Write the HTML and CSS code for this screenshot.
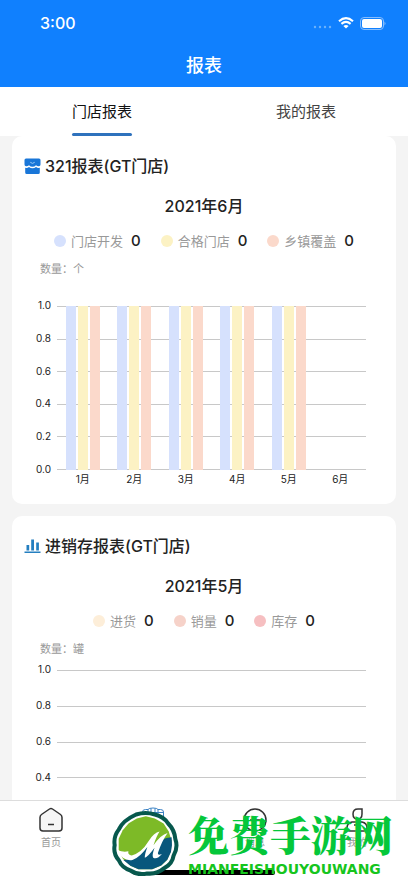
FILE: index.html
```html
<!DOCTYPE html>
<html lang="zh-CN">
<head>
<meta charset="utf-8">
<meta name="viewport" content="width=device-width, initial-scale=1">
<title>报表</title>
<link rel="stylesheet" href="styles.css">
</head>
<body>
<div class="app">
  <header class="header">
    <div class="status">
      <span class="clock">3:00</span>
      <div class="status-icons">
        <svg width="19" height="4" viewBox="0 0 19 4" fill="#6cb2fb"><circle cx="2" cy="2" r="1.2"/><circle cx="7" cy="2" r="1.2"/><circle cx="12" cy="2" r="1.2"/><circle cx="17" cy="2" r="1.2"/></svg>
        <svg width="16" height="12" viewBox="0 0 16 12" fill="none" stroke="#fff" stroke-width="2.1"><path d="M1 4.2Q8-2 15 4.2M3.4 6.9Q8 2.9 12.6 6.9"/><path d="M8 11.6L5.4 9Q8 6.9 10.6 9Z" fill="#fff" stroke="none"/></svg>
        <svg width="26" height="13" viewBox="0 0 26 13"><rect x=".5" y=".5" width="23" height="12" rx="3.5" fill="none" stroke="#86bdfd"/><rect x="2" y="2" width="20" height="9" rx="2" fill="#fff"/><path d="M24.5 4.5q2 2 0 4z" fill="#86bdfd"/></svg>
      </div>
    </div>
    <h1 class="page-title">报表</h1>
  </header>
  <nav class="tabs">
    <button class="tab tab-active" type="button"><span>门店报表</span></button>
    <button class="tab" type="button"><span>我的报表</span></button>
  </nav>
  <main class="content">
    <section class="card">
      <h2 class="card-title">
        <svg width="17" height="17" viewBox="0 0 17 17"><path d="M2 .5h13q1.500 0 1.500 1.500v4.500q0 1.500-1.500 1.800-1.500.3-3-1-1.500 1.500-3.500 1.500T5 7.300q-1.500 1.300-3 1Q.5 8 .5 6.500V2Q.5.5 2 .5Z" fill="#1976d8"/><path d="M1.200 9.800q2.300.4 3.800-.8 1.500 1.300 3.500 1.300T12 9q1.500 1.200 3.800.8v4.700q0 1.500-1.500 1.500H2.700q-1.500 0-1.500-1.500Z" fill="#1976d8"/><path d="M6.300 4.300q2.200 2.200 4.400 0" fill="none" stroke="#9bcaf5"/></svg>
        <span>321报表(GT门店)</span>
      </h2>
      <h3 class="month">2021年6月</h3>
      <ul class="legend">
        <li><i class="dot blue"></i><span>门店开发</span><b>0</b></li>
        <li><i class="dot yellow"></i><span>合格门店</span><b>0</b></li>
        <li><i class="dot coral"></i><span>乡镇覆盖</span><b>0</b></li>
      </ul>
      <p class="unit">数量：个</p>
      <div class="chart chart-bars">
        <div class="axis"><span>1.0</span><span>0.8</span><span>0.6</span><span>0.4</span><span>0.2</span><span>0.0</span></div>
        <div class="plot">
          <div class="lines"><hr><hr><hr><hr><hr><hr></div>
          <div class="groups">
            <div class="group"><i class="blue"></i><i class="yellow"></i><i class="coral"></i></div>
            <div class="group"><i class="blue"></i><i class="yellow"></i><i class="coral"></i></div>
            <div class="group"><i class="blue"></i><i class="yellow"></i><i class="coral"></i></div>
            <div class="group"><i class="blue"></i><i class="yellow"></i><i class="coral"></i></div>
            <div class="group"><i class="blue"></i><i class="yellow"></i><i class="coral"></i></div>
            <div class="group"></div>
          </div>
        </div>
        <div class="months"><span>1月</span><span>2月</span><span>3月</span><span>4月</span><span>5月</span><span>6月</span></div>
      </div>
    </section>
    <section class="card">
      <h2 class="card-title">
        <svg width="17" height="17" viewBox="0 0 17 17" fill="#247fc0"><path d="M.5 13.500h16V15H.5zM2.500 7h2.700v5.500H2.500zM7.200 1.500h2.800v11H7.200zM12.200 4.500h2.700v8h-2.700z"/></svg>
        <span>进销存报表(GT门店)</span>
      </h2>
      <h3 class="month">2021年5月</h3>
      <ul class="legend">
        <li><i class="dot cream"></i><span>进货</span><b>0</b></li>
        <li><i class="dot salmon"></i><span>销量</span><b>0</b></li>
        <li><i class="dot pink"></i><span>库存</span><b>0</b></li>
      </ul>
      <p class="unit">数量：罐</p>
      <div class="chart chart-lines">
        <div class="axis"><span>1.0</span><span>0.8</span><span>0.6</span><span>0.4</span><span>0.2</span><span>0.0</span></div>
        <div class="plot"><div class="lines"><hr><hr><hr><hr><hr><hr></div></div>
      </div>
    </section>
  </main>
  <footer class="footer">
    <nav class="bottom-nav">
      <a class="nav-item" href="#home">
        <svg width="26" height="26" viewBox="0 0 26 26" fill="none" stroke="#333" stroke-width="1.5"><path d="M2 10.500Q2 8.500 3.500 7.500L11.500 2q1.500-1 3 0l8 5.500Q24 8.500 24 10.500V21q0 3-3 3H5q-3 0-3-3Z" fill="#f6f6f6"/><path d="M10 17.500h6"/></svg>
        <span>首页</span>
      </a>
      <a class="nav-item nav-current" href="#reports">
        <svg width="26" height="26" viewBox="0 0 26 26" fill="none" stroke="#3b82c4"><path d="M2.500 24V5q0-2.500 3-2.500H8Q9 1 13 1t5 1.500h2.500q3 0 3 2.500v19ZM8 2.500V8M18 2.500V8M3 5.500h20M11 1.500v4M15 1.500v4"/></svg>
        <span>报表</span>
      </a>
      <a class="nav-item" href="#messages">
        <svg width="26" height="26" viewBox="0 0 26 26" fill="none" stroke="#333" stroke-width="1.500"><circle cx="13" cy="13" r="11"/><path d="M8 13h10"/></svg>
        <span>消息</span>
      </a>
      <a class="nav-item" href="#mine">
        <svg width="26" height="26" viewBox="0 0 26 26" fill="none" stroke="#333" stroke-width="1.500"><path d="M18 2v5q0 5-4.500 5T9 7q0-5 5-5ZM8 15h10q5 1 5 6 0 3-3 3H6q-3 0-3-3 0-5 5-6ZM10 18h6"/></svg>
        <span>我的</span>
      </a>
    </nav>
    <div class="home-bar"></div>
    <div class="watermark">
      <svg class="badge" viewBox="0 0 200 196">
        <path d="M72 10Q100 1 128 10Q154 16 167 36Q187 56 189 83Q198 108 184 132Q180 158 156 170Q134 189 105 186Q77 192 55 177Q30 170 20 146Q3 127 8 101Q4 76 20 55Q32 28 72 10Z" fill="#fff" stroke="#07584d" stroke-width="12" stroke-linejoin="round"/>
        <path d="M74 22L101 15L128 22L154 37L169 60L178 88L176 119L165 145L147 162L120 173H79L55 163L33 143L20 115V82L32 57L50 36Z" fill="#7dba27"/>
        <path d="M178 78L179 102L176 122L165 145L147 162L120 173H79L55 163L34 146Q79 145 104 107Q111 128 130 105Q145 80 178 78Z" fill="#08577c"/>
        <path d="M17 117Q33 123 49 120Q46 131 59 132Q88 125 109 90Q125 64 142 61Q132 76 124 102Q145 70 166 65Q149 88 137 125Q136 134 149 128Q135 145 123 139Q118 133 127 109Q108 135 98 139Q97 129 106 106Q84 137 61 146Q32 151 17 117Z" fill="#fff"/>
      </svg>
      <div class="brand"><strong>免费手游网</strong><span>MIANFEISHOUYOUWANG</span></div>
    </div>
  </footer>
</div>
</body>
</html>
```

FILE: styles.css
```css
* { box-sizing: border-box; }
body {
  margin: 0;
  background: #f4f4f4;
  color: #222;
  font-family: Inter, "Noto Sans CJK SC", sans-serif;
}
h1, h2, h3, p, ul { margin: 0; padding: 0; }
svg { display: block; flex: none; }

.app { display: flex; flex-direction: column; height: 100vh; }

.header { flex: none; background: #1080fe; color: #fff; }
.status {
  display: flex;
  justify-content: space-between;
  align-items: center;
  height: 44px;
  padding: 2px 22px 0 40px;
}
.clock { font-size: 16px; font-weight: 500; }
.status-icons { display: flex; align-items: center; gap: 6px; }
.status-icons svg:first-child { margin-top: 8px; }
.page-title { height: 43px; line-height: 43px; font-size: 18px; font-weight: 500; text-align: center; }

.tabs { flex: none; display: flex; height: 49px; background: #fff; }
.tab {
  flex: 1;
  display: flex;
  justify-content: center;
  padding: 0;
  border: 0;
  background: none;
  color: #444;
  font: 400 15px/49px Inter, "Noto Sans CJK SC", sans-serif;
}
.tab span { display: flex; flex-direction: column; height: 49px; }
.tab-active { color: #111; }
.tab-active span::after { content: ""; height: 3px; margin-top: -3px; border-radius: 2px; background: #2f72bd; }

.content { flex: 1; min-height: 0; overflow: hidden; padding: 0 12px; }
.card { margin-bottom: 12px; padding: 18px 12px 14px; border-radius: 10px; background: #fff; }
.card-title { display: flex; align-items: center; gap: 4px; font-size: 16px; line-height: 24px; font-weight: 500; }
.month { margin-top: 16px; font-size: 16px; line-height: 24px; font-weight: 500; text-align: center; }
.legend { display: flex; justify-content: center; gap: 20px; margin-top: 13px; line-height: 20px; list-style: none; }
.legend li { display: flex; align-items: center; }
.legend span { margin: 0 8px 0 5px; color: #999; font-size: 13px; }
.legend b { font-size: 15px; font-weight: 500; }
.dot { width: 12px; height: 12px; border-radius: 50%; }
.unit { margin: 10px 0 0 16px; color: #999; font-size: 11px; line-height: 16px; }

.blue { background: #d6e1fd; }
.yellow { background: #fcf2c4; }
.coral { background: #fbd9cb; }
.cream { background: #fdeed9; }
.salmon { background: #f6d2c9; }
.pink { background: #f6bfc1; }

.chart {
  display: grid;
  grid-template-columns: 27px 1fr;
  column-gap: 6px;
  padding-right: 18px;
  font-size: 10px;
  line-height: 12px;
}
.chart-bars { grid-template-rows: 164px 20px; margin-top: 29px; }
.chart-lines { grid-template-rows: 180px; margin-top: 13px; }
.axis { display: flex; flex-direction: column; justify-content: space-between; margin: -7px 0 -5px; text-align: right; }
.plot { display: grid; }
.lines, .groups { grid-area: 1 / 1; }
.lines { display: flex; flex-direction: column; justify-content: space-between; }
.lines hr { width: 100%; height: 1px; margin: 0; border: 0; background: #c8c8c8; }
.groups { display: flex; z-index: 1; }
.group { flex: 1; display: flex; justify-content: center; gap: 2px; }
.group i { width: 10px; }
.months { grid-column: 2; display: flex; padding-top: 3px; }
.months span { flex: 1; text-align: center; }

.footer { position: relative; flex: none; height: 83px; border-top: 1px solid #ddd; background: #fff; }
.bottom-nav { display: flex; padding-top: 6px; }
.nav-item { flex: 1; display: flex; flex-direction: column; align-items: center; gap: 2px; color: #999; font-size: 10px; line-height: 14px; text-decoration: none; }
.nav-current { color: #2f72bd; }
.home-bar { position: absolute; bottom: 8px; left: 50%; width: 142px; height: 5px; margin-left: -71px; border-radius: 3px; background: #000; }
.watermark { position: absolute; top: 10px; left: 112px; display: flex; gap: 9px; }
.badge { width: 67px; height: 66px; }
.brand { display: flex; flex-direction: column; gap: 4px; color: #05c73a; }
.brand strong { font: 900 41px/46px "Noto Serif CJK SC", "Noto Sans CJK SC", serif; white-space: nowrap; }
.brand span { font: 700 14px/16px "DejaVu Sans", Inter, sans-serif; color: #16c51d; }
```
